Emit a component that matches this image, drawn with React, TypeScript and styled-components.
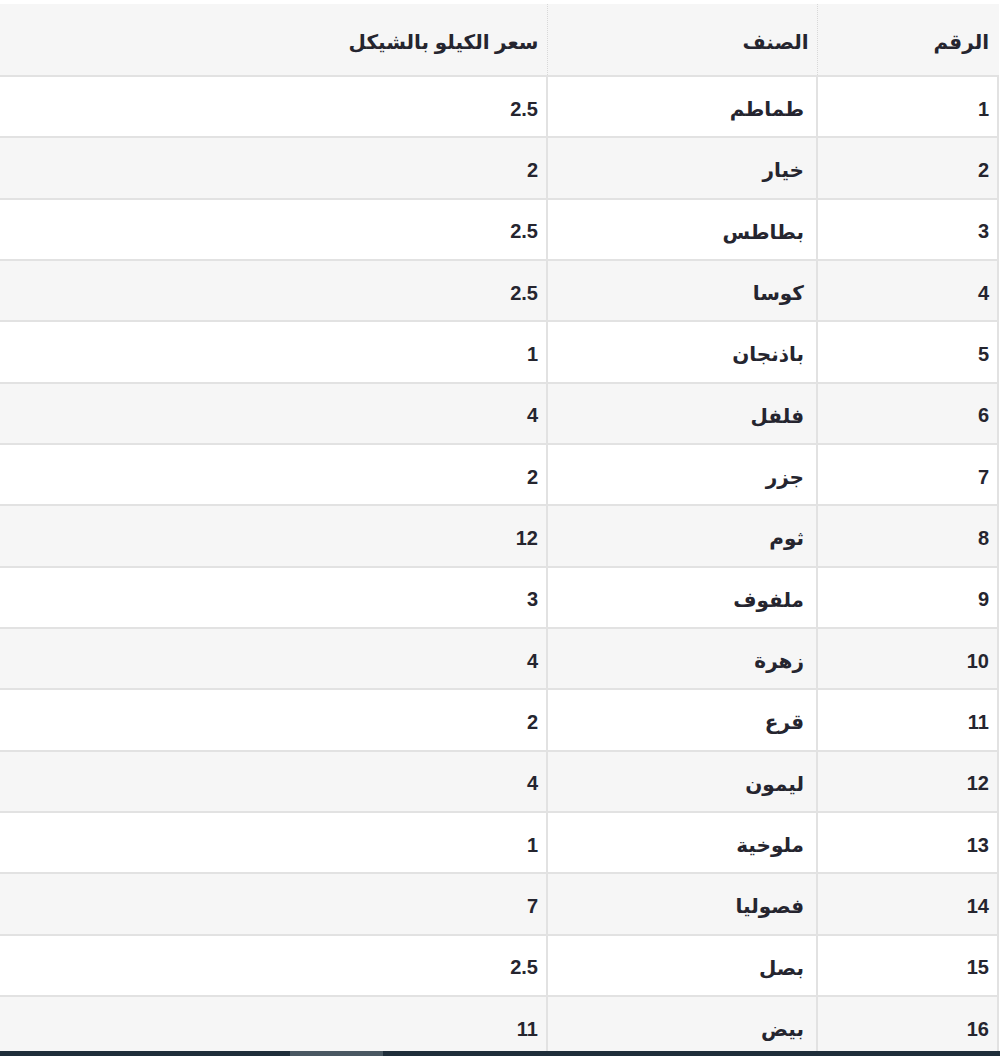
import React from 'react';
import styled, { createGlobalStyle } from 'styled-components';

const GlobalStyle = createGlobalStyle`
  html, body {
    margin: 0;
    padding: 0;
    background: #ffffff;
    overflow: hidden;
  }
`;

const Page = styled.div`
  width: 1000px;
  height: 1056px;
  display: flex;
  flex-direction: column;
  background: #ffffff;
`;

const TableArea = styled.div`
  flex: 1;
  overflow: hidden;
  padding-top: 4px;
  padding-right: 1px;
`;

const Table = styled.table`
  width: 999px;
  direction: rtl;
  border-collapse: collapse;
  table-layout: fixed;
  font-family: 'Liberation Sans', 'DejaVu Sans', sans-serif;
  font-weight: bold;
  font-size: 20px;
  color: #25252f;
`;

const HeadCell = styled.th<{ width?: number }>`
  box-sizing: border-box;
  width: ${(p) => (p.width ? `${p.width}px` : 'auto')};
  height: 72px;
  padding: 5px 8px 0;
  text-align: right;
  font-weight: bold;
  background: #f6f6f6;
  border-left: 1px dotted #d8d8d8;
  border-bottom: 2px solid #e2e2e2;
  &:first-child {
    border-right: 2px solid #f6f6f6;
  }
  &:last-child {
    border-left: none;
  }
`;

const Row = styled.tr<{ shaded: boolean }>`
  background: ${(p) => (p.shaded ? '#f6f6f6' : '#ffffff')};
`;

const Cell = styled.td`
  height: 54.33px;
  padding: 5px 8px 0;
  text-align: right;
  border: 2px solid #e2e2e2;
  border-top: none;
  &:last-child {
    border-left: none;
  }
  &:nth-child(2) {
    padding-right: 12px;
  }
`;

const BottomBar = styled.div`
  height: 5px;
  flex-shrink: 0;
  display: flex;
  background: #1f2e3a;
`;

const Thumb = styled.div`
  margin-left: 290px;
  width: 93px;
  background: #4a5862;
`;

const items: [string, string][] = [
  ['طماطم', '2.5'],
  ['خيار', '2'],
  ['بطاطس', '2.5'],
  ['كوسا', '2.5'],
  ['باذنجان', '1'],
  ['فلفل', '4'],
  ['جزر', '2'],
  ['ثوم', '12'],
  ['ملفوف', '3'],
  ['زهرة', '4'],
  ['قرع', '2'],
  ['ليمون', '4'],
  ['ملوخية', '1'],
  ['فصوليا', '7'],
  ['بصل', '2.5'],
  ['بيض', '11'],
];

export default function App() {
  return (
    <Page>
      <GlobalStyle />
      <TableArea>
        <Table>
          <thead>
            <tr>
              <HeadCell width={181}>الرقم</HeadCell>
              <HeadCell width={270}>الصنف</HeadCell>
              <HeadCell>سعر الكيلو بالشيكل</HeadCell>
            </tr>
          </thead>
          <tbody>
            {items.map(([name, price], i) => (
              <Row key={name} shaded={i % 2 === 1}>
                <Cell>{i + 1}</Cell>
                <Cell>{name}</Cell>
                <Cell>{price}</Cell>
              </Row>
            ))}
          </tbody>
        </Table>
      </TableArea>
      <BottomBar>
        <Thumb />
      </BottomBar>
    </Page>
  );
}
